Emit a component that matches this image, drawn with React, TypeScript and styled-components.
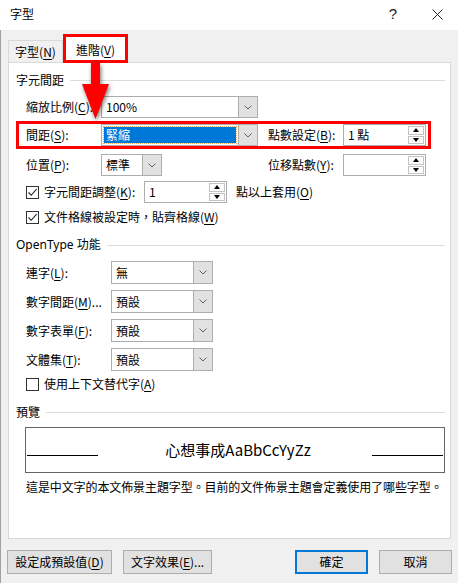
import React from "react";
import styled, { createGlobalStyle } from "styled-components";

const GlobalStyle = createGlobalStyle`
  html, body {
    margin: 0;
    padding: 0;
    background: #f0f0f0;
  }
  body {
    font-family: "Noto Sans CJK TC", "Noto Sans", sans-serif;
    font-size: 12px;
    color: #000;
  }
  u {
    text-decoration-thickness: 1px;
    text-underline-offset: 2px;
  }
`;

const Window = styled.div`
  position: relative;
  width: 458px;
  height: 583px;
  background: #f0f0f0;
  display: flex;
  flex-direction: column;
  overflow: hidden;
`;

const TitleBar = styled.div`
  height: 30px;
  flex: none;
  background: #fff;
  display: flex;
  align-items: center;
  padding-left: 10px;
  line-height: 16px;
`;

const TitleText = styled.div`
  flex: 1;
  padding-bottom: 2px;
`;

const TitleButton = styled.div<{ $w: number }>`
  width: ${(p) => p.$w}px;
  height: 30px;
  display: flex;
  align-items: center;
  justify-content: center;
  font-family: "Liberation Sans", sans-serif;
  font-size: 15px;
  color: #222;
  padding-bottom: 2px;
  box-sizing: border-box;
`;

const Body = styled.div`
  flex: 1;
  display: flex;
  flex-direction: column;
  padding: 0 6px 0 7px;
  border-left: 1px solid #a0a0a0;
`;

const TabStrip = styled.div`
  height: 32px;
  display: flex;
  align-items: flex-end;
`;

const Tab = styled.div<{ $active?: boolean }>`
  box-sizing: border-box;
  display: flex;
  align-items: center;
  justify-content: center;
  line-height: 16px;
  position: relative;
  z-index: 1;
  ${(p) =>
    p.$active
      ? `
    width: 65px;
    height: 29px;
    background: #fff;
    border: 3px solid #f00;
    margin-bottom: -1px;
    padding-top: 2px;
  `
      : `
    width: 55px;
    height: 22px;
    border: 1px solid #d9d9d9;
    border-bottom: none;
    padding-top: 1px;
  `}
`;

const Panel = styled.div`
  height: 477px;
  box-sizing: border-box;
  background: #fff;
  border: 1px solid #d9d9d9;
  margin-right: 1px;
  padding: 9px 5px 0 7px;
  display: flex;
  flex-direction: column;
`;

const GroupHeader = styled.div<{ $mt?: number }>`
  display: flex;
  align-items: center;
  gap: 6px;
  height: 16px;
  line-height: 16px;
  margin-top: ${(p) => p.$mt ?? 0}px;
  &::after {
    content: "";
    flex: 1;
    height: 1px;
    background: #dcdcdc;
    margin-top: 1px;
  }
`;

const HeaderLatin = styled.span`
  font-family: "Noto Sans", "Noto Sans CJK TC", sans-serif;
`;

const Row = styled.div<{ $mt?: number; $h?: number; $marked?: boolean }>`
  display: flex;
  align-items: center;
  height: ${(p) => p.$h ?? 22}px;
  margin-top: ${(p) => p.$mt ?? 0}px;
  margin-left: 3px;
  padding-left: 7px;
  line-height: 16px;
  white-space: nowrap;
  ${(p) =>
    p.$marked &&
    `
    width: 409px;
    box-sizing: border-box;
    outline: 3px solid #f00;
  `}
`;

const Label = styled.div<{ $w: number; $ml?: number }>`
  width: ${(p) => p.$w}px;
  margin-left: ${(p) => p.$ml ?? 0}px;
  flex: none;
  white-space: nowrap;
`;

const SelectBox = styled.div<{ $w: number; $h?: number }>`
  width: ${(p) => p.$w}px;
  height: ${(p) => p.$h ?? 22}px;
  box-sizing: border-box;
  border: 1px solid #adadad;
  background: #fff;
  display: flex;
  flex: none;
`;

const SelectValue = styled.div<{ $selected?: boolean }>`
  flex: 1;
  display: flex;
  align-items: center;
  padding-left: 4px;
  ${(p) =>
    p.$selected &&
    `
    margin: 2px 2px 2px 2px;
    padding-left: 2px;
    background: #0078d7;
    color: #fff;
    outline: 1px dotted #f0b060;
  `}
`;

const DropButton = styled.div`
  width: 18px;
  flex: none;
  border-left: 1px solid #adadad;
  background: #e1e1e1;
  display: flex;
  align-items: center;
  justify-content: center;
`;

const SpinBox = styled.div<{ $w: number; $ml?: number }>`
  width: ${(p) => p.$w}px;
  height: 22px;
  margin-left: ${(p) => p.$ml ?? 0}px;
  box-sizing: border-box;
  border: 1px solid #adadad;
  background: #fff;
  display: flex;
  flex: none;
`;

const SpinValue = styled.div`
  flex: 1;
  display: flex;
  align-items: center;
  padding-left: 4px;
`;

const SpinButtons = styled.div`
  width: 16px;
  flex: none;
  display: flex;
  flex-direction: column;
  gap: 1px;
  padding: 1px 1px 1px 0;
`;

const SpinButton = styled.div`
  flex: 1;
  border: 1px solid #c4c4c4;
  background: #fdfdfd;
  display: flex;
  align-items: center;
  justify-content: center;
`;

const Triangle = styled.div<{ $up?: boolean }>`
  width: 0;
  height: 0;
  border-left: 3.5px solid transparent;
  border-right: 3.5px solid transparent;
  ${(p) =>
    p.$up ? `border-bottom: 4px solid #000;` : `border-top: 4px solid #000;`}
`;

const CheckLabel = styled.label<{ $w?: number }>`
  display: flex;
  align-items: center;
  gap: 5px;
  ${(p) => (p.$w ? `width: ${p.$w}px; flex: none;` : "")}
`;

const CheckBox = styled.div`
  width: 13px;
  height: 13px;
  box-sizing: border-box;
  border: 1px solid #333;
  background: #fff;
  display: flex;
  align-items: center;
  justify-content: center;
  flex: none;
`;

const Preview = styled.div`
  margin-top: 7px;
  margin-left: 9px;
  width: 420px;
  height: 46px;
  box-sizing: border-box;
  border: 1px solid #646464;
  display: flex;
  align-items: center;
  padding: 0 1px;
`;

const PreviewLine = styled.div`
  width: 71px;
  height: 11px;
  border-bottom: 1px solid #000;
  flex: none;
`;

const PreviewText = styled.div`
  flex: 1;
  text-align: center;
  font-size: 15px;
  line-height: 20px;
  padding-left: 6px;
`;

const Description = styled.div`
  margin-top: 6px;
  margin-left: 10px;
  height: 16px;
  line-height: 16px;
  white-space: nowrap;
  letter-spacing: -0.1px;
`;

const Footer = styled.div`
  display: flex;
  align-items: center;
  margin-top: 11px;
  margin-left: -1px;
`;

const Button = styled.div<{ $w: number; $ml?: number; $default?: boolean }>`
  width: ${(p) => p.$w}px;
  height: 24px;
  margin-left: ${(p) => p.$ml ?? 0}px;
  box-sizing: border-box;
  background: #e1e1e1;
  border: ${(p) => (p.$default ? "2px solid #0078d7" : "1px solid #adadad")};
  display: flex;
  align-items: center;
  justify-content: center;
  line-height: 16px;
  white-space: nowrap;
`;

const Spacer = styled.div`
  flex: 1;
`;

const Arrow = styled.svg`
  position: absolute;
  left: 79px;
  top: 61px;
  filter: drop-shadow(1px 2px 2px rgba(0, 0, 0, 0.55));
  pointer-events: none;
  z-index: 5;
`;

const Chevron = () => (
  <svg width="8" height="5" viewBox="0 0 8 5">
    <path d="M0.5 0.5 L4 4 L7.5 0.5" fill="none" stroke="#606060" strokeWidth="1" />
  </svg>
);

const Check = () => (
  <svg width="11" height="11" viewBox="0 0 11 11">
    <path d="M1.5 5.5 L4.2 8.3 L9.6 2.2" fill="none" stroke="#222" strokeWidth="1.1" />
  </svg>
);

function Select({
  value,
  width,
  height,
  selected = false,
}: {
  value: string;
  width: number;
  height?: number;
  selected?: boolean;
}) {
  return (
    <SelectBox $w={width} $h={height}>
      <SelectValue $selected={selected}>{value}</SelectValue>
      <DropButton>
        <Chevron />
      </DropButton>
    </SelectBox>
  );
}

function Spin({ value = "", width, ml }: { value?: string; width: number; ml?: number }) {
  return (
    <SpinBox $w={width} $ml={ml}>
      <SpinValue>{value}</SpinValue>
      <SpinButtons>
        <SpinButton>
          <Triangle $up />
        </SpinButton>
        <SpinButton>
          <Triangle />
        </SpinButton>
      </SpinButtons>
    </SpinBox>
  );
}

function CheckItem({ children, checked, width }: { children: React.ReactNode; checked: boolean; width?: number }) {
  return (
    <CheckLabel $w={width}>
      <CheckBox>{checked && <Check />}</CheckBox>
      <span>{children}</span>
    </CheckLabel>
  );
}

const openTypeRows = [
  { label: <>連字(<u>L</u>):</>, value: "無", mt: 8 },
  { label: <>數字間距(<u>M</u>)...</>, value: "預設", mt: 6 },
  { label: <>數字表單(<u>F</u>):</>, value: "預設", mt: 6 },
  { label: <>文體集(<u>T</u>):</>, value: "預設", mt: 6 },
];

export default function App() {
  return (
    <Window>
      <GlobalStyle />
      <TitleBar>
        <TitleText>字型</TitleText>
        <TitleButton $w={46}>?</TitleButton>
        <TitleButton $w={42}>
          <svg width="11" height="11" viewBox="0 0 11 11">
            <path d="M0.5 0.5 L10.5 10.5 M10.5 0.5 L0.5 10.5" stroke="#222" strokeWidth="1" />
          </svg>
        </TitleButton>
      </TitleBar>

      <Body>
        <TabStrip>
          <Tab>
            字型(<u>N</u>)
          </Tab>
          <Tab $active>
            進階(<u>V</u>)
          </Tab>
        </TabStrip>

        <Panel>
          <GroupHeader>字元間距</GroupHeader>
          <Row $mt={8}>
            <Label $w={75}>
              縮放比例(<u>C</u>):
            </Label>
            <Select value="100%" width={157} />
          </Row>
          <Row $mt={6} $marked>
            <Label $w={75}>
              間距(<u>S</u>):
            </Label>
            <Select value="緊縮" width={157} selected />
            <Label $w={75} $ml={10}>
              點數設定(<u>B</u>):
            </Label>
            <Spin value="1 點" width={83} />
          </Row>
          <Row $mt={8}>
            <Label $w={75}>
              位置(<u>P</u>):
            </Label>
            <Select value="標準" width={61} />
            <Label $w={75} $ml={106}>
              位移點數(<u>Y</u>):
            </Label>
            <Spin width={83} />
          </Row>
          <Row $mt={5}>
            <CheckItem checked width={118}>
              字元間距調整(<u>K</u>):
            </CheckItem>
            <Spin value="1" width={83} />
            <Label $w={90} $ml={9}>
              點以上套用(<u>O</u>)
            </Label>
          </Row>
          <Row $mt={3}>
            <CheckItem checked>
              文件格線被設定時，貼齊格線(<u>W</u>)
            </CheckItem>
          </Row>

          <GroupHeader $mt={9}>
            <HeaderLatin>OpenType 功能</HeaderLatin>
          </GroupHeader>
          {openTypeRows.map((r, i) => (
            <Row key={i} $mt={r.mt} $h={23}>
              <Label $w={85}>{r.label}</Label>
              <Select value={r.value} width={102} height={23} />
            </Row>
          ))}
          <Row $mt={2}>
            <CheckItem checked={false}>
              使用上下文替代字(<u>A</u>)
            </CheckItem>
          </Row>

          <GroupHeader $mt={9}>預覽</GroupHeader>
          <Preview>
            <PreviewLine />
            <PreviewText>心想事成AaBbCcYyZz</PreviewText>
            <PreviewLine />
          </Preview>
          <Description>這是中文字的本文佈景主題字型。目前的文件佈景主題會定義使用了哪些字型。</Description>
        </Panel>

        <Footer>
          <Button $w={105}>
            設定成預設值(<u>D</u>)
          </Button>
          <Button $w={89} $ml={11}>
            文字效果(<u>E</u>)...
          </Button>
          <Spacer />
          <Button $w={73} $default>
            確定
          </Button>
          <Button $w={73} $ml={11}>
            取消
          </Button>
        </Footer>
      </Body>

      <Arrow width="34" height="62" viewBox="0 0 34 62">
        <rect x="12" y="2" width="9" height="24" fill="#f00" />
        <polygon points="3,23 30,23 16.5,58" fill="#f00" />
      </Arrow>
    </Window>
  );
}
